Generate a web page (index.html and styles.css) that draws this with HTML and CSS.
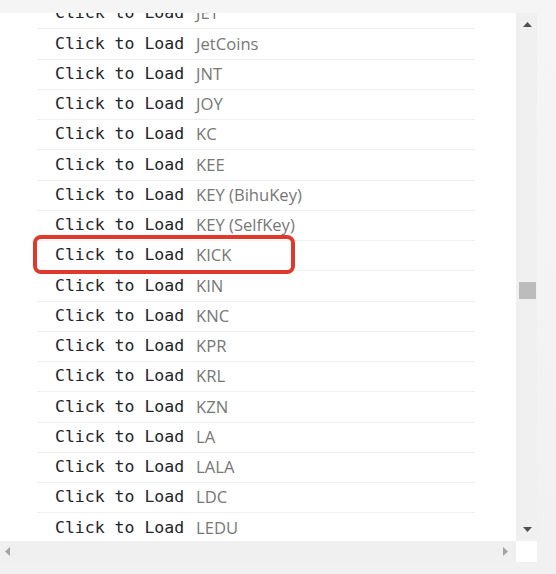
FILE: index.html
```html
<!DOCTYPE html>
<html>
<head>
<meta charset="utf-8">
<link rel="stylesheet" href="styles.css">
</head>
<body>
<div class="frame">
  <div class="viewport">
    <div class="list">
      <div class="row"><span class="cmd">Click to Load </span><span class="tok">JET</span></div>
      <div class="row"><span class="cmd">Click to Load </span><span class="tok">JetCoins</span></div>
      <div class="row"><span class="cmd">Click to Load </span><span class="tok">JNT</span></div>
      <div class="row"><span class="cmd">Click to Load </span><span class="tok">JOY</span></div>
      <div class="row"><span class="cmd">Click to Load </span><span class="tok">KC</span></div>
      <div class="row"><span class="cmd">Click to Load </span><span class="tok">KEE</span></div>
      <div class="row"><span class="cmd">Click to Load </span><span class="tok">KEY (BihuKey)</span></div>
      <div class="row"><span class="cmd">Click to Load </span><span class="tok">KEY (SelfKey)</span></div>
      <div class="row"><span class="cmd">Click to Load </span><span class="tok">KICK</span></div>
      <div class="row"><span class="cmd">Click to Load </span><span class="tok">KIN</span></div>
      <div class="row"><span class="cmd">Click to Load </span><span class="tok">KNC</span></div>
      <div class="row"><span class="cmd">Click to Load </span><span class="tok">KPR</span></div>
      <div class="row"><span class="cmd">Click to Load </span><span class="tok">KRL</span></div>
      <div class="row"><span class="cmd">Click to Load </span><span class="tok">KZN</span></div>
      <div class="row"><span class="cmd">Click to Load </span><span class="tok">LA</span></div>
      <div class="row"><span class="cmd">Click to Load </span><span class="tok">LALA</span></div>
      <div class="row"><span class="cmd">Click to Load </span><span class="tok">LDC</span></div>
      <div class="row"><span class="cmd">Click to Load </span><span class="tok">LEDU</span></div>
      <div class="row"><span class="cmd">Click to Load </span><span class="tok">LEND</span></div>
    </div>
    <div class="highlight"></div>
  </div>
  <div class="vbar">
    <svg class="arrow" width="9" height="5" viewBox="0 0 9 5"><polygon points="4.5,0 9,5 0,5" fill="#505050"/></svg>
    <div class="thumb"></div>
    <svg class="arrow down" width="9" height="5" viewBox="0 0 9 5"><polygon points="0,0 9,0 4.5,5" fill="#505050"/></svg>
  </div>
  <div class="hbar">
    <svg width="5" height="9" viewBox="0 0 5 9"><polygon points="5,0 5,9 0,4.5" fill="#a3a3a3"/></svg>
    <svg width="5" height="9" viewBox="0 0 5 9"><polygon points="0,0 5,4.5 0,9" fill="#a3a3a3"/></svg>
  </div>
  <div class="corner"></div>
</div>
</body>
</html>
```

FILE: styles.css
```css
html, body {
  margin: 0;
  padding: 0;
}
body {
  background: linear-gradient(to bottom, #f5f5f5 0%, #f1f1f1 100%);
  width: 556px;
  height: 574px;
  padding-top: 13px;
  box-sizing: border-box;
  overflow: hidden;
}
.frame {
  display: grid;
  grid-template-columns: 516px 21px;
  grid-template-rows: 528px 21px;
}
.viewport {
  position: relative;
  overflow: hidden;
  background: #ffffff;
}
.list {
  margin-top: -13.8px;
}
.row {
  box-sizing: border-box;
  height: 30.25px;
  margin-left: 37px;
  width: 438px;
  padding-left: 18px;
  padding-bottom: 2px;
  border-bottom: 1px solid #efefef;
  display: flex;
  align-items: center;
  white-space: pre;
}
.cmd {
  font-family: "DejaVu Sans Mono", monospace;
  font-size: 16.5px;
  color: #22222a;
}
.tok {
  font-family: "Open Sans", sans-serif;
  font-size: 16.6px;
  color: #777777;
  margin-left: 2px;
}
.highlight {
  position: absolute;
  left: 33px;
  top: 222px;
  width: 262px;
  height: 39px;
  box-sizing: border-box;
  border: 4px solid #e0382c;
  border-radius: 8px;
}
.vbar {
  background: #f0f0f0;
  display: flex;
  flex-direction: column;
  align-items: center;
  padding: 9px 0 9px 1px;
  box-sizing: border-box;
}
.arrow {
  display: block;
  flex: none;
}
.thumb {
  width: 17px;
  height: 17px;
  background: #bcbcbc;
  margin-top: 255px;
  flex: none;
}
.down {
  margin-top: auto;
}
.hbar {
  background: #f0f0f0;
  display: flex;
  align-items: center;
  justify-content: space-between;
  padding: 0 8px 0 5px;
}
.hbar svg {
  display: block;
}
.corner {
  background: #ffffff;
}
```
